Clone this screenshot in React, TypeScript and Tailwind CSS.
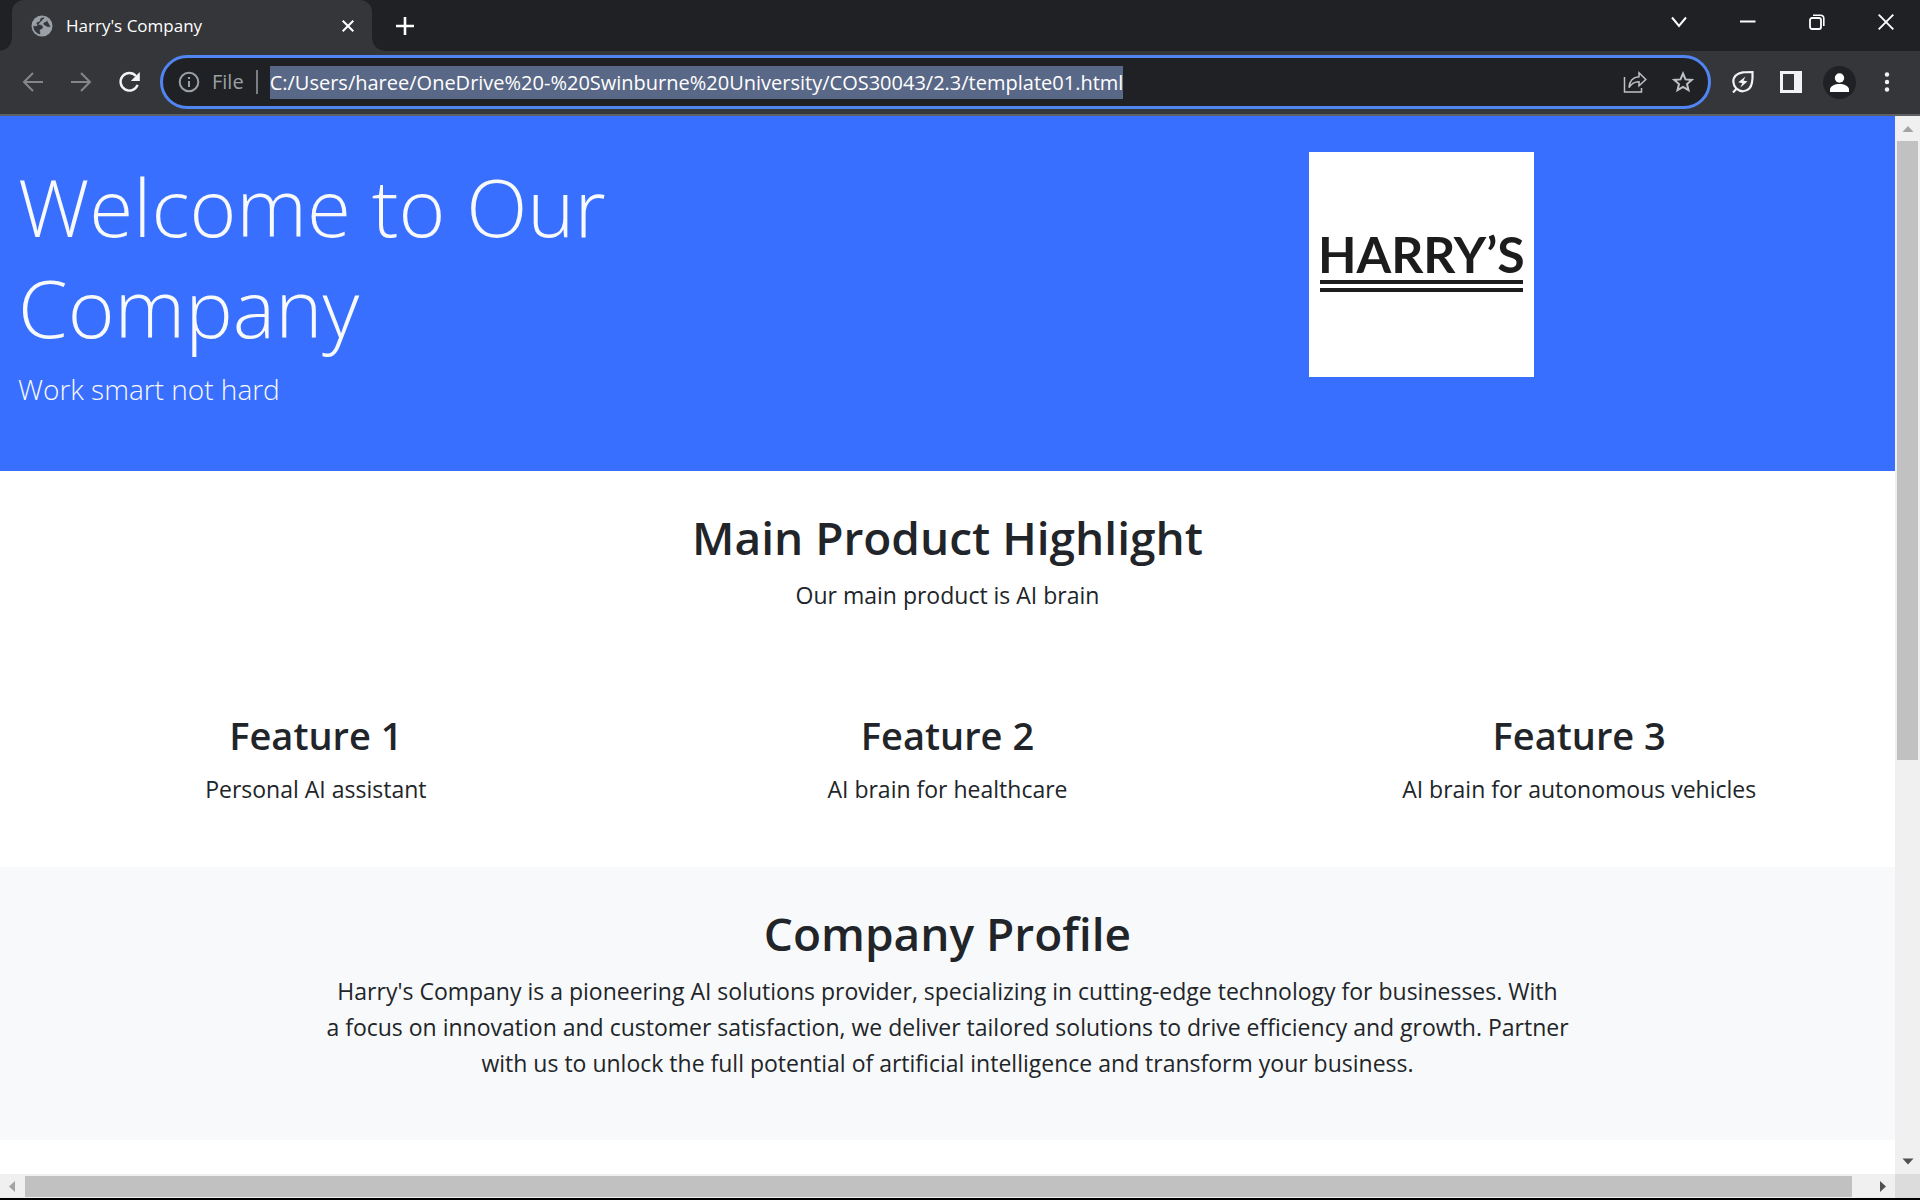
import type { ReactNode } from 'react';

const PAGE_URL =
  'C:/Users/haree/OneDrive%20-%20Swinburne%20University/COS30043/2.3/template01.html';

const FEATURES = [
  { title: 'Feature 1', text: 'Personal AI assistant' },
  { title: 'Feature 2', text: 'AI brain for healthcare' },
  { title: 'Feature 3', text: 'AI brain for autonomous vehicles' },
];

function GlobeIcon() {
  return (
    <svg width="22" height="22" viewBox="0 0 22 22" aria-hidden="true">
      <circle cx="11" cy="11" r="10.5" fill="#9aa0a6" />
      <path
        d="M13.500 2.800C11 2.800 9.300 3.300 9.300 4.800c0 1.500-.3 2.200-1.800 2.300-1.500.1-2 1.100-1.600 2 .4.700 1.300.8 2.600.8 2 0 3 .7 3.100 2 .1 1.200-.4 1.900-1.600 2.100-1.200.2-1.500 1-1.400 2.100.1 1.200.6 2 .4 3C5.300 18 2.600 15 2.600 11.200H5.500M19.400 11.600c-.6-.1-1.100.1-1.900.1-1.500 0-2-1-3.200-1.300-1-.3-1.700-.9-1.600-1.800.1-.9 1-1.200 1.900-1.300 1-.1 1.300-.7 1.300-1.700"
        fill="#35363a"
        stroke="#35363a"
        strokeWidth="0.5"
      />
    </svg>
  );
}

function ArrowIcon({ flip = false }: { flip?: boolean }) {
  return (
    <svg
      width="22"
      height="22"
      viewBox="0 0 22 22"
      fill="none"
      stroke="#85868a"
      strokeWidth="2"
      aria-hidden="true"
    >
      {flip ? <path d="M1 11h18.500M11 2l9 9-9 9" /> : <path d="M21 11H2.500M11 2l-9 9 9 9" />}
    </svg>
  );
}

function ReloadIcon() {
  return (
    <svg width="22" height="22" viewBox="0 0 22 22" aria-hidden="true">
      <path
        d="M19.600 13.800A8.800 8.800 0 1 1 18 5"
        fill="none"
        stroke="#f1f3f4"
        strokeWidth="2.4"
      />
      <path d="M21.800 1v9h-9z" fill="#f1f3f4" />
    </svg>
  );
}

function InfoIcon() {
  return (
    <svg width="22" height="22" viewBox="0 0 22 22" aria-hidden="true">
      <circle cx="11" cy="11" r="9.3" fill="none" stroke="#9aa0a6" strokeWidth="2" />
      <path d="M10 10h2v6h-2zM10 6h2v2h-2z" fill="#9aa0a6" />
    </svg>
  );
}

function ShareIcon() {
  return (
    <svg
      width="24"
      height="22"
      viewBox="0 0 24 22"
      fill="none"
      stroke="#bdc1c6"
      strokeWidth="1.5"
      aria-hidden="true"
    >
      <path d="M1.500 6v15h17v-4" />
      <path d="M6 16.500C6.500 10 10 6.200 16 5.800V1.800l6.800 6.700-6.800 6.200v-4C11.500 10.600 8.500 12.500 6 16.500z" />
    </svg>
  );
}

function StarIcon() {
  return (
    <svg
      width="22"
      height="22"
      viewBox="0 0 22 22"
      fill="none"
      stroke="#bdc1c6"
      strokeWidth="2"
      aria-hidden="true"
    >
      <path d="M11 2.500l2.500 5.900 6.300.5-4.800 4.100 1.500 6.200L11 15.900l-5.500 3.300 1.500-6.200-4.800-4.100 6.300-.5z" />
    </svg>
  );
}

function LeafIcon() {
  return (
    <svg width="24" height="24" viewBox="0 0 24 24" fill="none" aria-hidden="true">
      <path
        d="M5.500 18.700C1.500 14.500 1.200 9 5 5.300 8.500 2 14 2 21.500 2c.3 6.500.3 13-3.200 16.600-3.500 3.500-8.800 3.600-12.800.1zM6 18.200L2 22.500"
        stroke="#f1f3f4"
        strokeWidth="2.2"
      />
      <path d="M14.500 6.500L7.300 12.200l4 1-2 4.300 7.200-6-4-.9z" fill="#f1f3f4" />
    </svg>
  );
}

function SidePanelIcon() {
  return (
    <svg width="22" height="22" viewBox="0 0 22 22" aria-hidden="true">
      <path d="M0 0h22v22H0zM3 3v16h11V3z" fill="#f1f3f4" fillRule="evenodd" />
    </svg>
  );
}

function PersonIcon() {
  return (
    <svg width="33" height="33" viewBox="0 0 33 33" aria-hidden="true">
      <circle cx="16.5" cy="16.5" r="16.5" fill="#202124" />
      <circle cx="16.5" cy="12" r="4.7" fill="#fff" />
      <path d="M7 26v-2.500c0-3.500 5-5.500 9.500-5.500s9.500 2 9.500 5.500V26z" fill="#fff" />
    </svg>
  );
}

function DotsIcon() {
  return (
    <svg width="22" height="22" viewBox="0 0 22 22" fill="#f1f3f4" aria-hidden="true">
      <circle cx="11" cy="3.5" r="2.2" />
      <circle cx="11" cy="11" r="2.2" />
      <circle cx="11" cy="18.5" r="2.2" />
    </svg>
  );
}

function WindowButton({ label, children }: { label: string; children: ReactNode }) {
  return (
    <button
      type="button"
      aria-label={label}
      className="flex h-[43px] w-[69px] items-center justify-center"
    >
      <svg
        width="16"
        height="16"
        viewBox="0 0 16 16"
        fill="none"
        stroke="#fff"
        strokeWidth="1.6"
        aria-hidden="true"
      >
        {children}
      </svg>
    </button>
  );
}

function ToolButton({ label, children }: { label: string; children: ReactNode }) {
  return (
    <button
      type="button"
      aria-label={label}
      className="flex h-12 w-12 shrink-0 items-center justify-center"
    >
      {children}
    </button>
  );
}

function TabStrip() {
  return (
    <div className="flex h-[51px] shrink-0 justify-between bg-[#202124]">
      <div className="flex">
        <div className="relative ml-3 flex w-[360px] items-center rounded-t-xl bg-[#35363a] pr-4 pl-[19px] text-white">
          <span className="absolute bottom-0 -left-3 size-3 bg-[radial-gradient(circle_at_top_left,#202124_11px,#35363a_12px)]" />
          <span className="absolute -right-3 bottom-0 size-3 bg-[radial-gradient(circle_at_top_right,#202124_11px,#35363a_12px)]" />
          <GlobeIcon />
          <span className="ml-[13px] flex-1 text-[17px] leading-6">Harry's Company</span>
          <button type="button" aria-label="Close tab" className="flex size-4 items-center justify-center">
            <svg width="12" height="12" viewBox="0 0 12 12" stroke="#fff" strokeWidth="2" aria-hidden="true">
              <path d="M.7.7l10.600 10.600M11.300.7L.7 11.300" />
            </svg>
          </button>
        </div>
        <button type="button" aria-label="New tab" className="ml-4 flex w-[34px] items-center justify-center">
          <svg width="18" height="18" viewBox="0 0 18 18" stroke="#fff" strokeWidth="2.6" aria-hidden="true">
            <path d="M9 0v18M0 9h18" />
          </svg>
        </button>
      </div>
      <div className="flex">
        <WindowButton label="Search tabs">
          <path d="M1 3.500l7 8.500 7-8.500" strokeWidth="2" />
        </WindowButton>
        <WindowButton label="Minimize">
          <path d="M0 7.500h15.500" strokeWidth="2" />
        </WindowButton>
        <WindowButton label="Restore">
          <rect x="1" y="4" width="11" height="11" rx="2" strokeWidth="1.8" />
          <path d="M4 1.200h7.500a3.300 3.300 0 0 1 3.300 3.300V12" />
        </WindowButton>
        <WindowButton label="Close">
          <path d="M.7.7l14.600 14.600M15.300.7L.7 15.300" strokeWidth="1.9" />
        </WindowButton>
      </div>
    </div>
  );
}

function Toolbar() {
  return (
    <div className="flex h-[65px] shrink-0 items-center border-b-2 border-[#5f6063] bg-[#35363a] px-[9px] pb-px">
      <ToolButton label="Back">
        <ArrowIcon />
      </ToolButton>
      <ToolButton label="Forward">
        <ArrowIcon flip />
      </ToolButton>
      <ToolButton label="Reload">
        <ReloadIcon />
      </ToolButton>
      <div className="mr-2 ml-[7px] flex h-[54px] min-w-0 flex-1 items-center rounded-full border-3 border-[#5186f2] bg-[#202124] pr-px pl-[15px] text-xl">
        <InfoIcon />
        <label htmlFor="address" className="ml-3 text-[#9aa0a6]">
          File
        </label>
        <span className="ml-3 h-6 w-0.5 bg-[#7b7e82]" />
        <input
          id="address"
          type="text"
          defaultValue={PAGE_URL}
          spellCheck={false}
          className="ml-3 h-[33px] field-sizing-content bg-[#5a6887] text-white outline-none"
        />
        <div className="ml-auto flex">
          <ToolButton label="Share this page">
            <ShareIcon />
          </ToolButton>
          <ToolButton label="Bookmark this tab">
            <StarIcon />
          </ToolButton>
        </div>
      </div>
      <ToolButton label="Energy saver">
        <LeafIcon />
      </ToolButton>
      <ToolButton label="Side panel">
        <SidePanelIcon />
      </ToolButton>
      <ToolButton label="Profile">
        <PersonIcon />
      </ToolButton>
      <ToolButton label="Menu">
        <DotsIcon />
      </ToolButton>
    </div>
  );
}

function Logo() {
  return (
    <div
      role="img"
      aria-label="Harry's"
      className="mx-auto size-[225px] bg-white px-[11px] pt-[78px] text-[50px] leading-[49px] font-bold text-[#1c1c1c]"
    >
      <div className="flex justify-center font-['Lato',sans-serif] whitespace-nowrap">HARRY’S</div>
      <div className="mt-px h-1 bg-[#1c1c1c]" />
      <div className="mt-1 h-1 bg-[#1c1c1c]" />
    </div>
  );
}

function PageContent() {
  return (
    <main className="min-w-0 flex-1 overflow-hidden bg-white text-[23px] leading-9 text-[#212529]">
      <header className="grid grid-cols-2 bg-[#386fff] py-9 text-[#f8f9fa]">
        <div className="px-[18px] pt-[3px] font-light">
          <h1 className="mb-2.5 text-[80px] leading-[101px]">Welcome to Our Company</h1>
          <p className="mb-[23px] text-[28px] leading-[45px]">Work smart not hard</p>
        </div>
        <div>
          <Logo />
        </div>
      </header>

      <section className="pt-[37px] pb-9 text-center">
        <h2 className="mb-[11px] text-[46px] leading-[58px] font-semibold">Main Product Highlight</h2>
        <p className="mb-6">Our main product is AI brain</p>
      </section>

      <section className="grid grid-cols-3 pt-[37px] pb-9 text-center">
        {FEATURES.map((feature) => (
          <article key={feature.title}>
            <h3 className="mb-[11px] text-[38px] leading-[50px] font-semibold">{feature.title}</h3>
            <p className="mb-6">{feature.text}</p>
          </article>
        ))}
      </section>

      <section className="bg-[#f8f9fa] pt-[37px] pb-9 text-center">
        <div className="mx-auto w-2/3 px-2">
          <h2 className="mb-[11px] text-[46px] leading-[58px] font-semibold">Company Profile</h2>
          <p className="mb-[23px]">
            Harry's Company is a pioneering AI solutions provider, specializing in cutting-edge
            technology for businesses. With a&nbsp;focus on innovation and customer satisfaction, we
            deliver tailored solutions to drive efficiency and growth. Partner with us to unlock the
            full potential of artificial intelligence and transform your business.
          </p>
        </div>
      </section>
    </main>
  );
}

function VerticalScrollbar() {
  return (
    <div className="flex w-[25px] shrink-0 flex-col items-center bg-[#f0f0f0]">
      <svg className="h-[25px] shrink-0" width="12" height="25" viewBox="0 0 12 25" aria-hidden="true">
        <path d="M.5 16L6 10l5.500 6z" fill="#a3a3a3" />
      </svg>
      <div className="flex w-[21px] flex-1 flex-col">
        <div className="basis-[61.4%] bg-[#c1c1c1]" />
      </div>
      <svg className="h-[25px] shrink-0" width="12" height="25" viewBox="0 0 12 25" aria-hidden="true">
        <path d="M.5 9.500h11L6 15.500z" fill="#505050" />
      </svg>
    </div>
  );
}

function HorizontalScrollbar() {
  return (
    <div className="flex h-6 shrink-0 bg-[#f0f0f0]">
      <svg className="w-[25px] shrink-0" width="25" height="24" viewBox="0 0 25 24" aria-hidden="true">
        <path d="M15 7v11L9 12.500z" fill="#a3a3a3" />
      </svg>
      <div className="flex flex-1 pt-0.5 pb-px">
        <div className="w-[99%] bg-[#c1c1c1]" />
      </div>
      <svg className="w-[25px] shrink-0" width="25" height="24" viewBox="0 0 25 24" aria-hidden="true">
        <path d="M10 7v11l6-5.500z" fill="#505050" />
      </svg>
      <div className="w-[25px] shrink-0 bg-[#dcdcdc]" />
    </div>
  );
}

export default function App() {
  return (
    <div className="flex h-screen flex-col overflow-hidden border-b-2 border-black bg-[#202124] font-['Open_Sans','Noto_Sans',sans-serif]">
      <TabStrip />
      <Toolbar />
      <div className="flex min-h-0 flex-1">
        <PageContent />
        <VerticalScrollbar />
      </div>
      <HorizontalScrollbar />
    </div>
  );
}
